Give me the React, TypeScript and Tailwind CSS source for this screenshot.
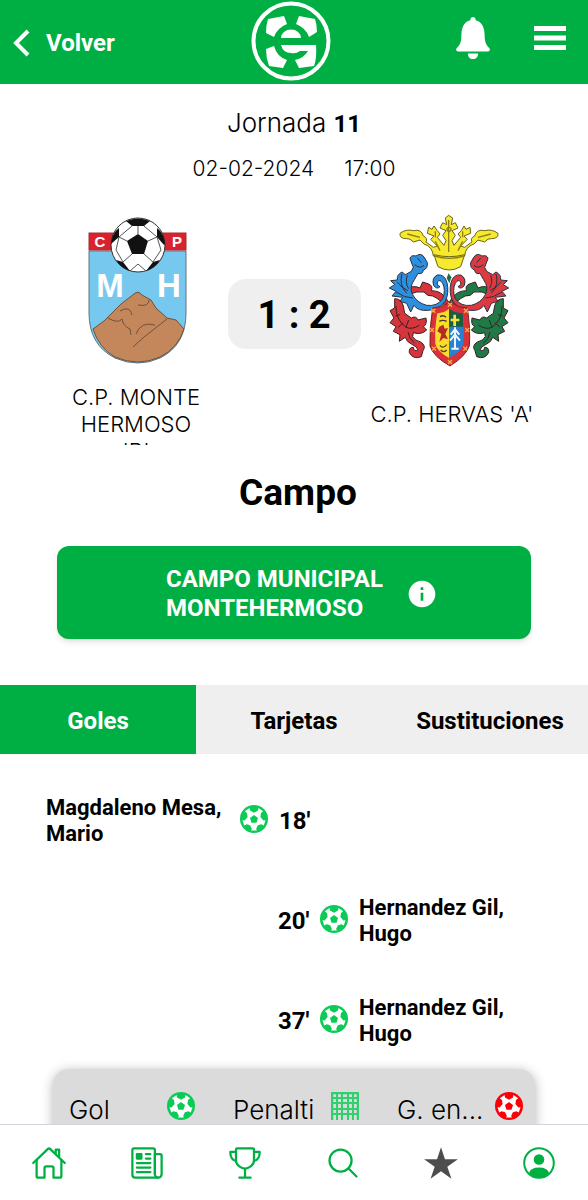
import { useState } from 'react';
import type { ReactNode } from 'react';
import { IoIosNotifications } from 'react-icons/io';
import {
  IoHomeOutline,
  IoNewspaperOutline,
  IoSearchOutline,
  IoStarSharp,
  IoTrophyOutline,
} from 'react-icons/io5';
import { MdInfo } from 'react-icons/md';

type Goal = {
  side: 'home' | 'away';
  minute: number;
  player: string;
};

const GOALS: Goal[] = [
  { side: 'home', minute: 18, player: 'Magdaleno Mesa, Mario' },
  { side: 'away', minute: 20, player: 'Hernandez Gil, Hugo' },
  { side: 'away', minute: 37, player: 'Hernandez Gil, Hugo' },
];

const TABS = ['Goles', 'Tarjetas', 'Sustituciones'];

function Logo() {
  return (
    <svg viewBox="0 0 80 80" className="w-20 h-20" aria-label="Inicio">
      <circle cx="40" cy="40" r="37.5" fill="none" stroke="#fff" strokeWidth="4" />
      <g fill="#fff">
        <path d="M17 18 L33 15 L36 23 Q26 27 23 36 L15 32 Q15 24 17 18Z" />
        <path d="M64 18 L48 15 L45 23 Q55 27 58 36 L66 31 Q66 24 64 18Z" />
        <path d="M15 48 L23 45 Q26 56 36 59 L32 67 L18 65 Q15 57 15 48Z" />
        <path d="M30 37 A10 8.500 0 0 1 50 37Z" />
        <path d="M30 44 L65 44 Q66 57 63 65 L48 67 L44 59 Q53 57 57 50 L49 50 Q45 53 40 52 Q32 52 30 44Z" />
      </g>
    </svg>
  );
}

function Ball({ className }: { className: string }) {
  return (
    <svg viewBox="0 0 28 28" className={className} aria-hidden>
      <circle cx="14" cy="14" r="14" fill="currentColor" />
      <path
        fill="#fff"
        d="M9.6 2.9 L10 5.5 L14 7.7 L18 5.5 L18.4 2.9 L23.2 6.3 L21 8 L20.4 12 L23.4 15.5 L25.5 15.3 L23.8 20.6 L21.4 19.3 L17.9 20.2 L16.1 23.9 L17 25.5 L11 25.5 L11.9 23.9 L10.1 20.2 L6.6 19.3 L4.2 20.6 L2.5 15.3 L4.6 15.5 L7.6 12 L7 8 L4.8 6.3Z"
      />
      <path
        fill="currentColor"
        d="M14 10 L18 13 L16.5 17.7 L11.5 17.7 L10 13Z"
      />
    </svg>
  );
}

function Net() {
  return (
    <svg
      viewBox="0 0 28 28"
      className="mb-[6px] w-7 h-7 shrink-0 text-[#2fd06d]"
      fill="none"
      stroke="currentColor"
      aria-hidden
    >
      <path strokeWidth="2.500" d="M1 28V1H27V28" />
      <path
        strokeWidth="2"
        d="M6 1V28M11 1V28M17 1V28M22 1V28M1 6H27M1 11H27M1 17H27M1 22H27"
      />
    </svg>
  );
}

function UserCircle() {
  return (
    <svg viewBox="0 0 32 32" className="w-8 h-8" aria-hidden>
      <circle cx="16" cy="16" r="14.8" fill="none" stroke="currentColor" strokeWidth="2" />
      <circle cx="16" cy="12.5" r="5.3" fill="currentColor" />
      <path d="M6 26 Q7.5 20.5 16 20.5 Q24.500 20.500 26 26 Q22 30.500 16 30.500 Q10 30.500 6 26Z" fill="currentColor" />
    </svg>
  );
}

function HomeCrest() {
  return (
    <svg viewBox="0 0 100 148" className="w-[100px] h-[148px]" aria-label="C.P. Monte Hermoso">
      <path d="M1 34H98V96Q98 128 72 141Q50 151 27 141Q1 128 1 96Z" fill="#77c8ee" stroke="#5d7480" />
      <path
        d="M5 112 L16 104 L33 87 L46 77 Q50 73 54 78 L63 83 L68 91 L79 101 L88 103 L96 112 Q90 131 72 140 Q50 150 27 140 Q11 131 5 112Z"
        fill="#c3875b"
        stroke="#715039"
      />
      <path
        d="M32 94Q42 88 44 98M20 101Q30 107 34 102Q35 109 42 112L43 118M48 117Q53 104 67 108M45 130L56 120L79 102M50 88Q61 90 61 83"
        fill="none"
        stroke="#715039"
      />
      <rect x="1" y="16" width="97" height="17" fill="#d9222d" stroke="#a12f36" />
      <g fill="#fff" fontFamily="Liberation Sans" fontWeight="700" textAnchor="middle">
        <text x="12" y="30" fontSize="15">C</text>
        <text x="89" y="30" fontSize="15">P</text>
        <text x="22" y="80" fontSize="33">M</text>
        <text x="81" y="80" fontSize="33">H</text>
      </g>
      <circle cx="50" cy="28" r="27" fill="#fff" stroke="#333" />
      <g fill="#111">
        <path d="M50 17 L60 24 L56 37 L44 37 L39 24Z" />
        <path d="M38 4 Q50 -1 62 4 L56 9 H44Z" />
        <path d="M23 27 Q24 16 31 11 L31 20Z" />
        <path d="M77 27 Q76 16 69 11 L69 20 L76 28Z" />
        <path d="M28 43 L35 45 L42 54 Q33 51 28 43Z" />
        <path d="M72 43 L65 45 L58 54 Q67 51 72 43Z" />
      </g>
      <path
        d="M50 17V9M60 24L69 20M56 37L65 45M44 37L35 45M39 24L31 20M31 20L28 33L35 45M69 20L73 33L65 45M44 9L31 20M56 9L69 20M42 54L50 47L58 54"
        fill="none"
        stroke="#555"
      />
    </svg>
  );
}

function Mantle() {
  return (
    <g strokeWidth="3" strokeLinejoin="round">
      <path
        d="M62 278 Q82 278 88 300 L92 322 L112 336 Q126 328 132 342 L156 336 Q160 356 148 362 L158 372 Q142 388 118 380 L116 392 Q122 404 140 408 Q158 420 147 434 L142 452 Q118 462 106 440 Q104 424 118 424 Q120 438 132 432 Q130 422 112 414 Q98 408 94 394 L76 406 L78 386 L58 376 L66 362 L48 350 L60 336 L48 314 L62 306Z"
        fill="var(--low)"
        stroke="#3c2020"
      />
      <path d="M66 300Q64 340 96 364Q114 372 136 358M78 326L64 330M88 350L72 364M104 342L96 364M102 378Q104 398 122 412" fill="none" stroke="#3c2020" />
      <path
        d="M92 250 Q118 236 138 246 L146 228 L164 234 Q178 240 172 254 Q198 254 212 272 Q222 288 238 300 L228 318 Q204 282 176 270 Q160 272 150 258 Q126 254 106 266Z"
        fill="var(--low)"
        stroke="#3c2020"
      />
      <path
        d="M108 158 Q110 146 126 150 Q142 138 152 156 L160 170 Q162 188 148 192 Q146 206 132 202 L122 220 Q104 244 116 266 Q128 290 158 298 Q190 302 206 278 Q216 252 206 232 Q198 218 190 228 Q186 238 198 242 Q188 252 179 238 Q172 216 190 207 Q212 204 219 230 Q226 260 214 286 Q194 312 162 313 Q132 316 120 298 L110 318 L98 292 L78 286 L86 274 L54 270 L66 256 L46 246 L62 236 L50 224 L70 222 Q68 206 84 198 L94 206 L112 196 L118 184Z"
        fill="var(--top)"
        stroke="#27303f"
      />
      <path d="M84 204Q74 236 98 262M70 228Q82 246 102 254M66 258Q92 276 116 276M100 208Q92 230 104 248M122 176Q138 190 150 178M130 156L142 170" fill="none" stroke="#27303f" />
    </g>
  );
}

function AwayCrest() {
  return (
    <svg viewBox="0 0 124 154" className="mr-1 w-[124px] h-[154px]" aria-label="C.P. Hervas">
      {/* helmet plumes and shield are mirrored around x = 225 */}
      <g transform="translate(-14 -8) scale(.3333)">
        <g fill="#f7e92e" stroke="#6b6414" strokeWidth="3" strokeLinejoin="round">
          <path d="M178 150 Q176 122 150 114 L138 102 L118 108 Q108 96 98 98 Q76 98 78 82 Q96 68 118 74 Q142 68 148 90 Q162 96 156 108 L178 124 L190 120 L170 100 L180 90 L160 82 L164 64 L174 70 L180 60 L190 74 L198 84 L190 94 L210 118 L216 104 L206 88 L216 74 L198 66 L206 50 L218 56 L214 36 L224 28 L236 36 L232 56 L244 50 L252 66 L234 74 L244 88 L234 104 L240 118 L260 94 L252 84 L262 74 L270 60 L276 70 L288 64 L290 82 L270 90 L280 100 L260 120 L272 124 L294 108 Q288 96 302 90 Q308 68 332 74 Q354 68 372 82 Q374 98 352 98 Q342 96 332 108 L312 102 L300 114 Q274 122 272 150 Q226 162 178 150Z" />
          <path d="M180 146 Q226 158 272 146 L260 182 Q226 202 192 182Z" />
        </g>
        <g fill="none" stroke="#8a7f18" strokeWidth="4">
          <path d="M182 150Q226 164 270 150M224 42V138M198 134L184 106M252 134L266 106M100 84L138 94M350 84L312 94M184 76V94M266 76V94" />
          <circle cx="225" cy="70" r="6" />
        </g>
        <g className="[--top:#2f8fdf] [--low:#d5353c]">
          <Mantle />
        </g>
        <g className="[--top:#dc3a40] [--low:#1f7a48]" transform="translate(450 0) scale(-1 1)">
          <Mantle />
        </g>
        <path d="M224 202L218 216L226 232L232 214Z" fill="#22694a" />
        <path d="M176 306 L200 302 L228 288 L254 302 L280 306 Q290 370 286 420 Q276 450 228 480 Q178 452 168 420 Q166 366 176 306Z" fill="#d9303a" stroke="#7a2320" strokeWidth="3" />
        <path d="M190 322 Q212 320 225 308 V456 Q190 436 184 414 Q182 360 190 322Z" fill="#f9dc2c" />
        <path d="M225 308 Q246 322 266 322 Q272 366 268 414 Q260 438 225 456Z" fill="#2a80d0" />
        <path d="M225 308 Q246 322 266 322 L268 362 H225Z" fill="#1c5d3e" />
        <path d="M242 326V360M230 342H256" stroke="#f4e542" strokeWidth="8" />
        <path d="M243 364V428M232 428H254M230 386L243 370L256 386M228 404L243 386L258 404" stroke="#eef6ff" strokeWidth="6" fill="none" />
        <path d="M198 332Q208 326 216 334M196 346Q206 340 218 346" stroke="#41382e" strokeWidth="4" fill="none" />
        <path d="M196 362L208 356L212 368L222 366L214 384L222 400L208 396L196 408L202 384L190 376Z" fill="#b52a26" />
        <path d="M198 418Q206 430 218 416M200 432Q210 442 218 432" stroke="#5b4724" strokeWidth="4" fill="none" />
        <g stroke="#f5b13d" strokeWidth="4">
          <path d="M172 308L184 320M184 308L172 320M222 290L234 302M234 290L222 302M270 308L282 320M282 308L270 320M168 366L180 378M180 366L168 378M274 366L286 378M286 366L274 378M174 422L186 434M186 422L174 434M268 422L280 434M280 422L268 434M222 462L234 474M234 462L222 474" />
        </g>
      </g>
    </svg>
  );
}

function GoalRow({ side, minute, player }: Goal) {
  const ball = <Ball className="mb-1 w-7 h-7 shrink-0 text-[#0bcb57]" />;
  if (side === 'home') {
    return (
      <li className="flex h-[100px] items-center pl-[46px]">
        <span className="w-[194px] pr-4 text-[22px] leading-[26px]">{player}</span>
        {ball}
        <span className="pl-[11px] text-2xl">{minute}'</span>
      </li>
    );
  }
  return (
    <li className="flex h-[100px] items-center pl-[278px]">
      <span className="w-[42px] text-2xl">{minute}'</span>
      {ball}
      <span className="w-[190px] pl-[11px] text-[22px] leading-[26px]">{player}</span>
    </li>
  );
}

function LegendItem({ label, children }: { label: string; children: ReactNode }) {
  return (
    <div className="flex min-w-0 items-center justify-between">
      <span className="whitespace-nowrap">{label}</span>
      {children}
    </div>
  );
}

export default function App() {
  const [tab, setTab] = useState('Goles');

  return (
    <div className="flex h-screen flex-col bg-white font-['Roboto',sans-serif] text-black">
      <header className="grid h-[84px] shrink-0 grid-cols-3 items-center bg-[#00af43] text-white">
        <button type="button" className="flex items-center gap-4 pt-[2px] pl-[13px] text-2xl font-bold">
          <svg viewBox="0 0 17 28" className="w-[17px] h-7" fill="none" stroke="currentColor" strokeWidth="4" aria-hidden>
            <path d="M15 2L3 14L15 26" />
          </svg>
          Volver
        </button>
        <div className="flex justify-center pr-[6px] pb-[2px]">
          <Logo />
        </div>
        <div className="flex items-center justify-end gap-[34px] pr-[22px] pb-2">
          <button type="button" aria-label="Notificaciones">
            <IoIosNotifications className="w-[54px] h-[54px]" />
          </button>
          <button type="button" aria-label="Menú">
            <svg viewBox="0 0 32 24" className="w-8 h-6" stroke="currentColor" strokeWidth="5" aria-hidden>
              <path d="M0 2.500H32M0 12H32M0 21.500H32" />
            </svg>
          </button>
        </div>
      </header>

      <main className="min-h-0 flex-1 overflow-hidden">
        <div className="pt-[21px] text-center font-['Inter',sans-serif] font-light">
          <p className="text-[26px] leading-9">
            Jornada <b className="font-['Roboto'] text-2xl font-bold">11</b>
          </p>
          <p className="mt-3 flex justify-center gap-[30px] text-[21px] leading-8">
            <span>02-02-2024</span>
            <span>17:00</span>
          </p>
        </div>

        <section className="flex justify-between px-[52px] pt-6">
          <div className="flex w-[168px] flex-col items-center">
            <div className="flex h-[164px] items-center pl-1">
              <HomeCrest />
            </div>
            <p className="mt-[11px] h-[61px] w-[140px] overflow-hidden text-center font-['Inter',sans-serif] text-[22px] leading-[27px] font-light">
              C.P. MONTE HERMOSO 'B'
            </p>
          </div>
          <p className="mt-[70px] flex h-[70px] w-[133px] shrink-0 items-center justify-center rounded-[18px] bg-[#efefef] pt-[2px] text-[38px] font-bold">
            1 : 2
          </p>
          <div className="flex w-[168px] flex-col items-center">
            <div className="flex h-[164px] items-center">
              <AwayCrest />
            </div>
            <p className="mt-[11px] flex h-[60px] items-center font-['Inter',sans-serif] text-[22px] font-light whitespace-nowrap">
              C.P. HERVAS 'A'
            </p>
          </div>
        </section>

        <h2 className="mt-[23px] pl-2 text-center text-[37px] leading-[50px] font-bold">Campo</h2>
        <div className="mt-7 px-[57px]">
          <button
            type="button"
            className="flex h-[93px] w-full items-center justify-center gap-5 rounded-xl bg-[#00af43] pt-[2px] pl-4 text-left text-2xl leading-[29px] font-bold text-white shadow-md"
          >
            <span className="w-[220px]">CAMPO MUNICIPAL MONTEHERMOSO</span>
            <MdInfo className="w-8 h-8" />
          </button>
        </div>

        <div role="tablist" className="mt-[46px] grid h-[69px] grid-cols-3 bg-[#efefef]">
          {TABS.map((name) => (
            <button
              key={name}
              type="button"
              role="tab"
              aria-selected={tab === name}
              onClick={() => setTab(name)}
              className={`pt-[2px] text-2xl font-bold ${tab === name ? 'bg-[#00af43] text-white' : ''}`}
            >
              {name}
            </button>
          ))}
        </div>

        <ul className="pt-[17px] font-bold">
          {GOALS.map((goal) => (
            <GoalRow key={goal.minute} {...goal} />
          ))}
        </ul>

        <div className="mx-[53px] -mt-[2px] grid h-20 grid-cols-[126px_126px_126px] justify-between rounded-2xl bg-[#dbdbdb] pr-3 pl-4 font-['Inter',sans-serif] text-[26px] font-light shadow-[0_2px_12px_rgba(0,0,0,0.3)]">
          <LegendItem label="Gol">
            <Ball className="mb-[6px] w-7 h-7 shrink-0 text-[#0bcb57]" />
          </LegendItem>
          <LegendItem label="Penalti">
            <Net />
          </LegendItem>
          <LegendItem label="G. en...">
            <Ball className="mb-[6px] w-7 h-7 shrink-0 text-[#fb0007]" />
          </LegendItem>
        </div>
      </main>

      <nav className="relative grid h-[76px] shrink-0 grid-cols-6 border-t border-gray-300 bg-white text-[#00af43]">
        <a href="#inicio" aria-label="Inicio" className="flex items-center justify-center">
          <IoHomeOutline className="w-9 h-9" />
        </a>
        <a href="#noticias" aria-label="Noticias" className="flex items-center justify-center">
          <IoNewspaperOutline className="w-9 h-9" />
        </a>
        <a href="#competiciones" aria-label="Competiciones" className="flex items-center justify-center">
          <IoTrophyOutline className="w-9 h-9" />
        </a>
        <a href="#buscar" aria-label="Buscar" className="flex items-center justify-center">
          <IoSearchOutline className="w-9 h-9" />
        </a>
        <a href="#favoritos" aria-label="Favoritos" className="flex items-center justify-center text-[#4d4d4d]">
          <IoStarSharp className="w-9 h-9" />
        </a>
        <a href="#perfil" aria-label="Perfil" className="flex items-center justify-center">
          <UserCircle />
        </a>
      </nav>
    </div>
  );
}
